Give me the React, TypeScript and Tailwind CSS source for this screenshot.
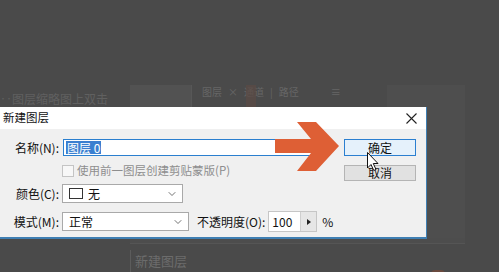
import { ChevronDown } from "lucide-react";

const cjk = "font-['Noto_Sans_CJK_SC','Noto_Sans',sans-serif]";

const Dropdown = ({ width, children }: { width: string; children: React.ReactNode }) => (
    <div className={`${width} h-[19px] flex items-center justify-between bg-white border border-[#a9a9a9] pl-[6px] pr-[4px]`}>
        <div className="flex items-center gap-[5px]">{children}</div>
        <ChevronDown size={12} strokeWidth={1.5} className="text-[#444]" />
    </div>
);

const App = () => {
    return (
        <div className={`relative w-[499px] h-[272px] overflow-hidden bg-[#4a4a4a] ${cjk}`}>
            {/* blurred photoshop background */}
            <div className="flex flex-col h-full">
                <div className="h-[85px] shrink-0" />
                <div className="flex flex-1">
                    <div className="w-[130px] shrink-0">
                        <div className="h-[22px] pt-[7px] text-[12px] leading-[14px] text-[#606060] whitespace-nowrap">
                            ‥图层缩略图上双击
                        </div>
                    </div>
                    <div className="w-[335px] shrink-0 flex flex-col">
                        <div className="flex h-[22px]">
                            <div className="w-[62px] bg-[#525252] border-r border-[#575757]" />
                            <div className="flex items-start pl-[10px] gap-[6px] text-[10px] leading-[13px] text-[#666]">
                                <span>图层</span>
                                <span>×</span>
                                <span className="relative">
                                    通道
                                    <span className="absolute left-[2px] top-0 w-[10px] h-[22px] bg-[#5b4a44] opacity-70" />
                                </span>
                                <span>|</span>
                                <span>路径</span>
                                <span className="ml-[26px]">≡</span>
                            </div>
                            <div className="ml-auto w-[78px] bg-[#4e4e4e]" />
                        </div>
                        <div className="flex h-[131px]">
                            <div className="flex-1" />
                            <div className="w-[78px] bg-[#4e4e4e]" />
                        </div>
                        <div className="h-[6px] bg-[#4d4d4d] border-b border-[#555]" />
                        <div className="flex flex-1 pt-[6px]">
                            <div className="border-l border-[#5c5c5c] pl-[4px] pt-[4px] text-[13px] leading-[14px] text-[#6c6c6c]">
                                新建图层
                            </div>
                            <div className="ml-auto mr-[20px] mt-[20px] w-[14px] h-[8px] rounded-full bg-[#6a4a3e]" />
                        </div>
                    </div>
                </div>
            </div>

            {/* New layer dialog */}
            <div className="absolute left-0 top-[107px] w-[427px] flex flex-col border-r border-b-2 border-[#3f7fb3] bg-[#f0f0f0] text-[12px] text-[#111]">
                <div className="h-[22px] bg-white flex items-center justify-between pl-[3px] pr-[8px]">
                    <span className="text-[11.5px]">新建图层</span>
                    <svg width="11" height="11" viewBox="0 0 11 11" className="mr-[1px]">
                        <path d="M0.5 0.5 L10.5 10.5 M10.5 0.5 L0.5 10.5" stroke="#222" strokeWidth="1.1" />
                    </svg>
                </div>
                <div className="flex h-[108px] pt-[10px]">
                    <div className="w-[344px] flex flex-col">
                        <div className="flex items-center h-[17px]">
                            <span className="w-[59px] text-right">名称(N):</span>
                            <div className="ml-[4px] w-[265px] h-[17px] bg-white border border-[#2a7fcf] flex items-center pl-[2px] relative">
                                <span className="bg-[#3b7fd0] text-white leading-[13px] px-[1px]">图层 0</span>
                                <span className="absolute right-[-2px] bottom-[-2px] w-[4px] h-[4px] bg-white border border-[#6b9bc8]" />
                            </div>
                        </div>
                        <div className="flex items-center h-[12px] mt-[9px] pl-[62px] text-[11.5px] text-[#8e8e8e]">
                            <div className="w-[12px] h-[12px] border border-[#c4c4c4] bg-[#f7f7f7]" />
                            <span className="ml-[3px]">使用前一图层创建剪贴蒙版(P)</span>
                        </div>
                        <div className="flex items-center mt-[7px]">
                            <span className="w-[59px] text-right">颜色(C):</span>
                            <div className="ml-[3px]">
                                <Dropdown width="w-[121px]">
                                    <span className="w-[14px] h-[11px] border border-[#333] bg-white" />
                                    <span>无</span>
                                </Dropdown>
                            </div>
                        </div>
                        <div className="flex items-center mt-[8px]">
                            <span className="w-[59px] text-right">模式(M):</span>
                            <div className="ml-[3px]">
                                <Dropdown width="w-[127px]">
                                    <span>正常</span>
                                </Dropdown>
                            </div>
                            <span className="ml-[8px]">不透明度(O):</span>
                            <div className="ml-[3px] flex h-[21px] border border-[#c6c6c6]">
                                <div className="w-[31px] bg-white flex items-center pl-[3px]">100</div>
                                <div className="w-[16px] bg-[#e6e6e6] border-l border-[#cfcfcf] flex items-center justify-center">
                                    <svg width="4" height="6" viewBox="0 0 4 6">
                                        <path d="M0 0 L4 3 L0 6 Z" fill="#222" />
                                    </svg>
                                </div>
                            </div>
                            <span className="ml-[5px]">%</span>
                        </div>
                    </div>
                    <div className="w-[72px] flex flex-col gap-[9px]">
                        <button className="h-[17px] bg-[#e5f1fb] border border-[#2b7fd0] flex items-center justify-center leading-none">
                            确定
                        </button>
                        <button className="h-[16px] bg-[#e1e1e1] border border-[#b4b4b4] flex items-center justify-center leading-none">
                            取消
                        </button>
                    </div>
                </div>
            </div>

            {/* annotation arrow */}
            <svg className="absolute left-0 top-0" width="499" height="272" viewBox="0 0 499 272">
                <polygon
                    points="275,139 311,139 297,122 316,122 339,146 316,171 297,171 311,153 275,153"
                    fill="#de5f35"
                />
            </svg>

            {/* mouse cursor */}
            <svg className="absolute left-[367px] top-[152px]" width="13" height="20" viewBox="0 0 13 20">
                <path d="M0.5 0.5 L0.5 16 L4 12.5 L6.8 18.5 L9 17.5 L6.3 11.5 L11 11.5 Z" fill="#fff" stroke="#111" strokeWidth="1" strokeLinejoin="round" />
            </svg>
        </div>
    );
};

export default App;
